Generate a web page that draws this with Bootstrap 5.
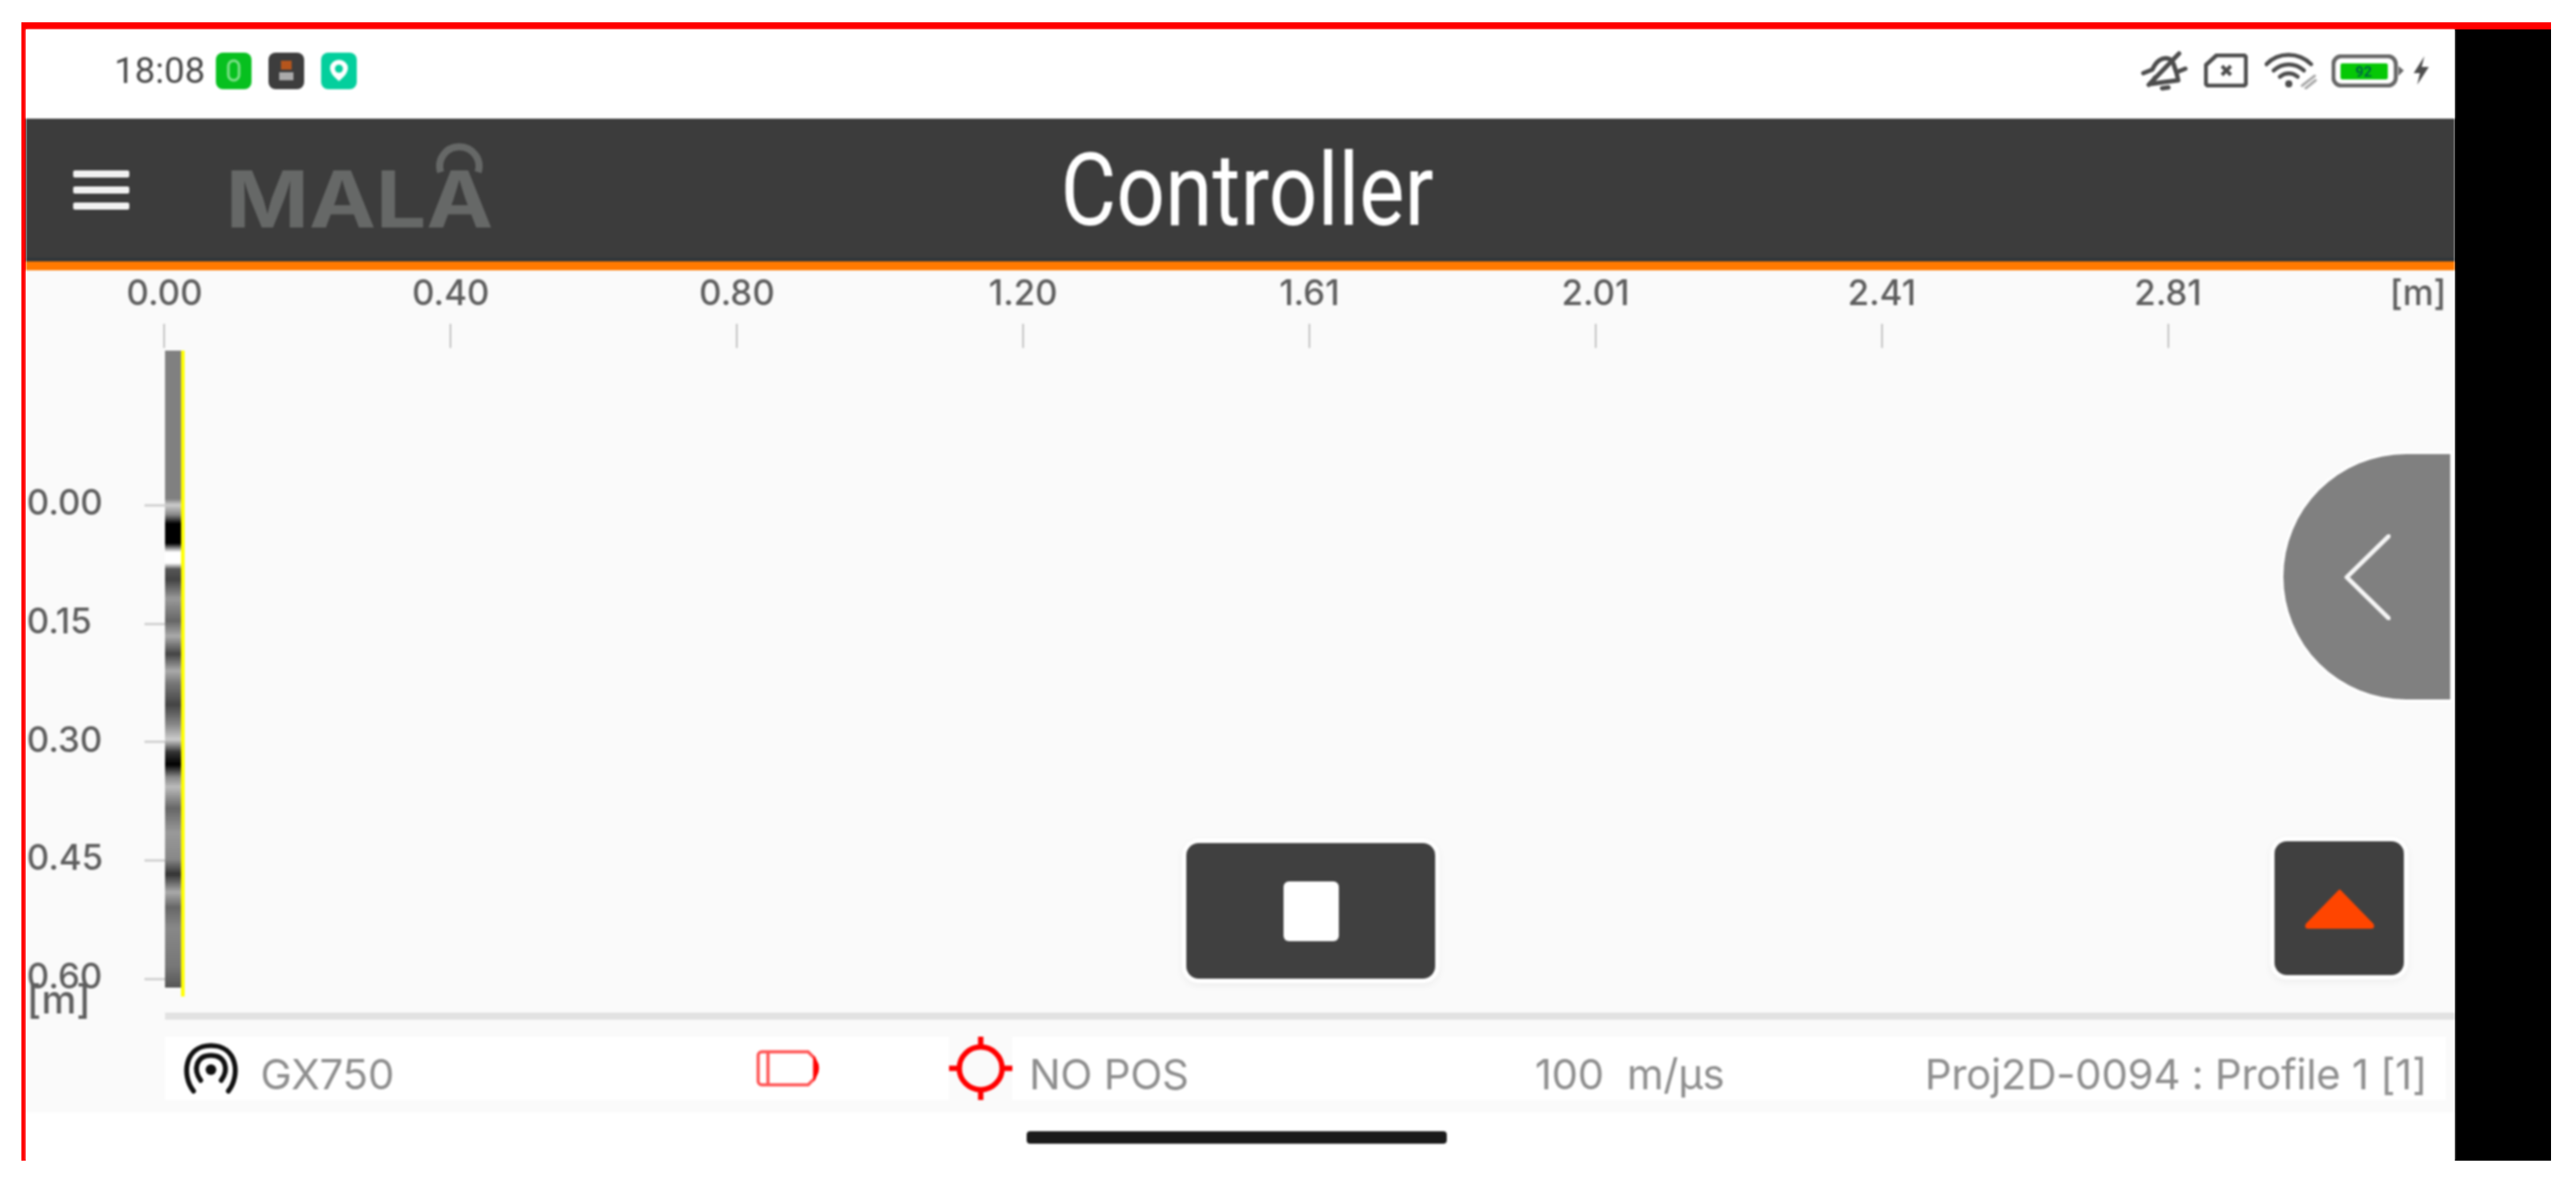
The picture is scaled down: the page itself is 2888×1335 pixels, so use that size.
<!DOCTYPE html>
<html lang="en">

<head>
    <meta charset="UTF-8">
    <meta name="viewport" content="width=device-width, initial-scale=1.0">
    <title>Controller</title>
    <link href="https://cdn.jsdelivr.net/npm/bootstrap@5.3.3/dist/css/bootstrap.min.css" rel="stylesheet">
    <style>
        body { background: #fff; overflow: hidden; }
        .frame { width: 2836px; height: 1276px; margin: 25px 0 0 24px; border-top: 8px solid #f00; border-left: 5px solid #f00; }
        .screen { width: 2723px; height: 1268px; position: relative; overflow: hidden; background: #fff; filter: blur(.8px); }
        .side-black { width: 108px; background: #000; }

        .phone-bar { height: 100px; padding: 0 28px 8px 99px; }
        .clock { font: 400 41px Roboto, sans-serif; color: #4a4a4a; width: 114px; }
        .app-ico { width: 40px; height: 41px; border-radius: 8px; margin-right: 19px; }
        .ico-green { background: #07c01f; }
        .ico-dark { background: #3d3d3d; }
        .ico-teal { background: #04cf9d; }
        .batt-num { font: 700 16px Roboto, sans-serif; fill: #064; }

        .app-head { height: 170px; padding: 0 0 0 53px; background: #3c3c3c; border-bottom: 10px solid #ff7a00; box-shadow: inset 0 -4px 0 #30363a; flex-wrap: nowrap; justify-content: flex-start; }
        .burger { width: 63px; }
        .burger span { display: block; height: 8px; margin: 10px 0; background: #f2f2f2; border-radius: 2px; }
        .logo-svg { margin: 19px 0 0 107px; }
        .logo-txt { font: 700 88px Inter, sans-serif; fill: #666867; }
        .app-title { margin: 0 0 0 632px; font: 400 113px/1 Roboto, sans-serif; color: #fff; transform: scaleX(.85); transform-origin: left center; white-space: nowrap; }

        .chart { height: 832px; background: #fafafa; position: relative; }
        .x-axis { height: 90px; margin-left: -5px; }
        .x-cell { width: 320.9px; flex: none; text-align: center; }
        .x-unit { margin-left: 88px; flex: none; font-size: 44px; }
        .ax-txt { font: 500 39px/50px Inter, sans-serif; color: #5e5e5e; white-space: nowrap; }
        .x-tick { width: 2px; height: 27px; margin: 10px auto 0; background: #c4c4c4; }

        .plot-row { height: 742px; }
        .y-axis { width: 156px; padding: 104px 0 0 1px; flex: none; position: relative; }
        .y-cell { height: 132.7px; }
        .y-tick { width: 23px; height: 3px; background: #d4d4d4; margin-top: 6px; }
        .y-unit { position: absolute; left: 1px; top: 704px; line-height: 46px; font-size: 44px; }
        .scan { width: 22px; height: 724px; border-right: 4px solid #ff0; flex: none; background-repeat: no-repeat; background-size: 100% 714px;
            background-image: linear-gradient(#808080 0, #808080 166px, #ccc 173px, #888 184px, #000 194px, #000 216px, #fff 226px, #fff 238px, #555 245px, #444 257px, #999 278px, #666 303px, #aaa 320px, #444 340px, #aaa 359px, #777 373px, #444 397px, #888 419px, #ccc 436px, #333 450px, #000 464px, #888 478px, #bbb 489px, #666 513px, #999 540px, #888 570px, #333 587px, #aaa 607px, #666 624px, #888 647px, #777 690px, #555 714px); }

        .stop-btn, .up-btn { position: absolute; background: #404040; border: 0; border-radius: 14px; box-shadow: 0 0 0 5px #fff, 0 3px 8px 5px rgba(0,0,0,.05); padding: 0; }
        .stop-btn { left: 1301px; top: 642px; width: 279px; height: 152px; }
        .stop-btn span { width: 62px; height: 67px; background: #fff; border-radius: 6px; }
        .up-btn { left: 2521px; top: 640px; width: 145px; height: 150px; }
        .side-tab { position: absolute; left: 2531px; top: 206px; width: 187px; height: 275px; padding-left: 68px; background: #808080; border-radius: 138px 0 0 138px; box-shadow: 0 0 0 3px #fff; }

        .divider-wrap { background: #fafafa; }
        .divider { height: 8px; margin-left: 156px; background: #e2e2e2; }
        .foot-wrap { height: 104px; padding-top: 19px; background: #fafafa; }
        .foot-strip { height: 71px; margin: 0 10px 0 156px; padding: 0 21px 0 20px; background: #fff; }
        .foot-txt { font: 400 47px/1 Inter, sans-serif; color: #8e8e8e; white-space: nowrap; margin-top: 12px; letter-spacing: -.3px; }
        .crosshair { background: #fafafa; }
        .home-bar { width: 471px; height: 14px; margin: 21px 0 0 1122px; background: #1a1a1a; border-radius: 4px; }
    </style>
</head>

<body>
    <div class="frame d-flex">
        <div class="screen">
            <div class="phone-bar d-flex align-items-center">
                <div class="clock">18:08</div>
                <div class="app-ico ico-green d-flex align-items-center justify-content-center">
                    <svg width="16" height="26" viewBox="0 0 16 26"><rect x="2" y="2" width="12" height="22" rx="6" fill="none" stroke="#7fe08a" stroke-width="3"/></svg>
                </div>
                <div class="app-ico ico-dark d-flex flex-column align-items-center justify-content-center gap-1">
                    <svg width="18" height="24" viewBox="0 0 18 24"><rect x="3" y="1" width="12" height="10" fill="#b5551c"/><rect x="1" y="14" width="16" height="9" fill="#aaa"/></svg>
                </div>
                <div class="app-ico ico-teal d-flex align-items-center justify-content-center">
                    <svg width="24" height="26" viewBox="0 0 24 26"><path d="M12 25 C5 19 2 15 2 10 A10 9 0 0 1 22 10 C22 15 19 19 12 25Z" fill="#fff"/><circle cx="12" cy="11" r="4.5" fill="#04cf9d"/></svg>
                </div>
                <div class="ms-auto d-flex align-items-center">
                    <svg width="54" height="45" viewBox="0 0 54 45" fill="none" stroke="#4d4d4d" stroke-width="5" stroke-linecap="round" stroke-linejoin="round">
                        <path d="M3 25 L13 21 C17 12 24 6 32 9 C38 12 37 18 40 24 L50 20"/>
                        <path d="M40 24 L42 33 L26 35 L12 37 L16 30"/>
                        <path d="M24 42 L31 41"/>
                        <path d="M43 3 L9 38"/>
                    </svg>
                    <svg style="margin-left:17px" width="49" height="38" viewBox="0 0 49 38" fill="none" stroke="#4d4d4d" stroke-width="4.5" stroke-linejoin="round">
                        <path d="M14 2 H44 A3 3 0 0 1 47 5 V33 A3 3 0 0 1 44 36 H5 A3 3 0 0 1 2 33 V13Z"/>
                        <path d="M20 14 L30 24 M30 14 L20 24" stroke-width="4"/>
                    </svg>
                    <svg style="margin-left:19px" width="59" height="41" viewBox="0 0 59 41" fill="none" stroke="#4d4d4d" stroke-width="4.5" stroke-linecap="round">
                        <path d="M2 13 C15 -1 38 -1 52 13"/>
                        <path d="M10 20 C20 11 34 11 44 20"/>
                        <path d="M17 27 C23 22 31 22 37 27"/>
                        <circle cx="27" cy="35" r="4" fill="#4d4d4d" stroke="none"/>
                        <path d="M42 37 L56 26 M46 40 L57 31" stroke="#aaa" stroke-width="3"/>
                    </svg>
                    <svg style="margin-left:16px" width="82" height="37" viewBox="0 0 82 37">
                        <rect x="2" y="2" width="70" height="33" rx="9" fill="none" stroke="#666" stroke-width="4.5"/>
                        <rect x="10" y="10" width="53" height="18" rx="2" fill="#06c806"/>
                        <path d="M75 13 L81 18 L75 24Z" fill="#666"/>
                        <text class="batt-num" x="36" y="25" text-anchor="middle">92</text>
                    </svg>
                    <svg class="ms-2" width="20" height="32" viewBox="0 0 20 32"><path d="M14 0 L2 19 H9 L6 32 L19 12 H11Z" fill="#4d4d4d"/></svg>
                </div>
            </div>

            <nav class="navbar app-head">
                <div class="burger"><span></span><span></span><span></span></div>
                <svg class="logo-svg" width="305" height="125" viewBox="0 0 305 125">
                    <path d="M242 33 A22 22 0 1 1 284 33" fill="none" stroke="#666867" stroke-width="8"/>
                    <text class="logo-txt" transform="translate(1 95) scale(1.14 1)">MALA</text>
                </svg>
                <div class="app-title">Controller</div>
            </nav>

            <div class="chart">
                <div class="x-axis d-flex">
                    <div class="x-cell"><div class="ax-txt">0.00</div><div class="x-tick"></div></div>
                    <div class="x-cell"><div class="ax-txt">0.40</div><div class="x-tick"></div></div>
                    <div class="x-cell"><div class="ax-txt">0.80</div><div class="x-tick"></div></div>
                    <div class="x-cell"><div class="ax-txt">1.20</div><div class="x-tick"></div></div>
                    <div class="x-cell"><div class="ax-txt">1.61</div><div class="x-tick"></div></div>
                    <div class="x-cell"><div class="ax-txt">2.01</div><div class="x-tick"></div></div>
                    <div class="x-cell"><div class="ax-txt">2.41</div><div class="x-tick"></div></div>
                    <div class="x-cell"><div class="ax-txt">2.81</div><div class="x-tick"></div></div>
                    <div class="x-unit ax-txt">[m]</div>
                </div>
                <div class="plot-row d-flex">
                    <div class="y-axis">
                        <div class="y-cell d-flex align-items-center justify-content-between"><span class="ax-txt">0.00</span><span class="y-tick"></span></div>
                        <div class="y-cell d-flex align-items-center justify-content-between"><span class="ax-txt">0.15</span><span class="y-tick"></span></div>
                        <div class="y-cell d-flex align-items-center justify-content-between"><span class="ax-txt">0.30</span><span class="y-tick"></span></div>
                        <div class="y-cell d-flex align-items-center justify-content-between"><span class="ax-txt">0.45</span><span class="y-tick"></span></div>
                        <div class="y-cell d-flex align-items-center justify-content-between"><span class="ax-txt">0.60</span><span class="y-tick"></span></div>
                        <span class="y-unit ax-txt">[m]</span>
                    </div>
                    <div class="scan"></div>
                </div>

                <button type="button" class="btn stop-btn d-flex align-items-center justify-content-center"><span></span></button>
                <button type="button" class="btn up-btn d-flex align-items-center justify-content-center">
                    <svg width="80" height="47" viewBox="0 0 80 47"><path d="M40 3 L77 41 Q79 45 75 45 H5 Q1 45 3 41Z" fill="#ff4500" stroke="#ff4500" stroke-width="2" stroke-linejoin="round"/></svg>
                </button>
                <div class="side-tab d-flex align-items-center">
                    <svg width="52" height="96" viewBox="0 0 52 96"><path d="M50 2 L3 48 L50 94" fill="none" stroke="#f5f5f5" stroke-width="5" stroke-linecap="round" stroke-linejoin="round"/></svg>
                </div>
            </div>

            <div class="divider-wrap"><div class="divider"></div></div>
            <div class="foot-wrap">
                <div class="foot-strip d-flex align-items-center">
                    <svg width="63" height="57" viewBox="0 0 63 57" fill="none" stroke="#111" stroke-width="5.5" stroke-linecap="round">
                        <path d="M12 54 C-2 36 2 3 31.5 3 C61 3 65 36 51 54"/>
                        <path d="M20 42 C11 30 15 14 31.5 14 C48 14 52 30 43 42"/>
                        <circle cx="31.5" cy="30" r="6" fill="#111" stroke="none"/>
                    </svg>
                    <span class="foot-txt ms-4">GX750</span>
                    <svg style="margin-left:406px" width="72" height="41" viewBox="0 0 72 41" fill="none" stroke="#f55" stroke-width="3.5">
                        <path d="M6 2 H58 L65 9 V32 L58 39 H6 A4 4 0 0 1 2 35 V6 A4 4 0 0 1 6 2Z"/>
                        <path d="M13 3 V38"/>
                        <path d="M66 12 Q71 20 66 29Z" fill="#f00" stroke="#f00"/>
                    </svg>
                    <svg class="crosshair" style="margin-left:144px" width="71" height="71" viewBox="0 0 71 71" fill="none" stroke="#f00" stroke-width="6">
                        <circle cx="35.5" cy="35.5" r="24"/>
                        <path d="M35.5 0 V12 M35.5 59 V71 M0 35.5 H12 M59 35.5 H71"/>
                    </svg>
                    <span class="foot-txt" style="margin-left:19px">NO POS</span>
                    <span class="foot-txt" style="margin-left:388px">100&nbsp; m/µs</span>
                    <span class="foot-txt ms-auto">Proj2D-0094 : Profile 1 [1]</span>
                </div>
            </div>
            <div class="home-bar"></div>
        </div>
        <div class="side-black"></div>
    </div>
</body>

</html>
